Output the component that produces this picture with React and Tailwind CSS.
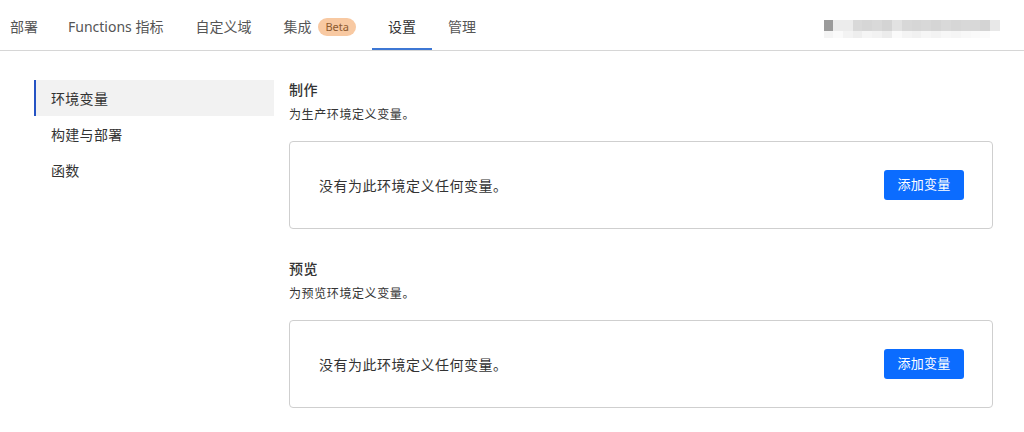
import React from "react";

const tabs = [
  { label: "部署" },
  { label: "Functions 指标" },
  { label: "自定义域" },
  { label: "集成", badge: "Beta" },
  { label: "设置", active: true },
  { label: "管理" },
];

const topCells = ["#9b9b9b", "#ececec", "#ececec", "#d9d9d9", "#d6d6d6", "#d9d9d9", "#d4d4d4", "#e2e2e2", "#d8d8d8", "#d6d6d6", "#d8d8d8", "#d5d5d5", "#d9d9d9", "#d6d6d6", "#d8d8d8", "#d8d8d8", "#d4d4d4", "#e8e8e8"];
const botCells = ["#f4f4f4", "#fafafa", "#f3f3f3", "#eeeeee", "#f5f5f5", "#f2f2f2", "#ececec", "#fafafa", "#f4f4f4", "#f1f1f1", "#f6f6f6", "#f3f3f3", "#f7f7f7", "#f5f5f5", "#f8f8f8", "#fafafa", "#fbfbfb", "#ffffff"];

function Redacted() {
  return (
    <div className="flex flex-col w-[176px]">
      <div className="flex h-[11px]">
        {topCells.map((c, i) => (
          <div key={i} className={i === 0 ? "w-[9px] h-full" : "flex-1 h-full"} style={{ backgroundColor: c }} />
        ))}
      </div>
      <div className="flex h-[7px] rounded-br-full overflow-hidden">
        {botCells.map((c, i) => (
          <div key={i} className={i === 0 ? "w-[9px] h-full" : "flex-1 h-full"} style={{ backgroundColor: c }} />
        ))}
      </div>
    </div>
  );
}

function Section({ title, desc }) {
  return (
    <div>
      <div className="text-[14px] leading-[20px] font-medium text-[#333] tracking-[0.5px]">{title}</div>
      <div className="mt-[6px] text-[12px] leading-[18px] text-[#333] tracking-[0.6px]">{desc}</div>
      <div className="mt-[17px] h-[88px] border border-[#cfcfcf] rounded-[4px] flex items-center justify-between pl-[29px] pr-[28px]">
        <span className="text-[14px] text-[#333] tracking-[0.5px]">没有为此环境定义任何变量。</span>
        <button className="w-[80px] h-[30px] bg-[#0b6cff] text-white text-[13px] rounded-[3px] tracking-[0.3px]">添加变量</button>
      </div>
    </div>
  );
}

export default function App() {
  return (
    <div
      className="w-[1024px] h-[432px] bg-white overflow-hidden"
      style={{ fontFamily: '"Noto Sans", "Noto Sans CJK SC", sans-serif' }}
    >
      <header className="h-[51px] border-b border-[#d6d6d6] flex items-stretch justify-between pr-[24px]">
        <nav className="flex items-stretch">
          {tabs.map((t, i) => (
            <div
              key={t.label}
              className={`flex items-center pt-[5px] border-b-2 ${i === 0 ? "pl-[10px] pr-[14px]" : "px-4"} ${
                t.active ? "border-[#3d77d4] text-[#333]" : "border-transparent text-[#555]"
              } text-[14px]`}
            >
              <span>{t.label}</span>
              {t.badge && (
                <span className="ml-[7px] h-[18px] px-[7px] rounded-full bg-[#f8c9a2] text-[#8d5a2f] text-[11px] leading-[18px]">
                  {t.badge}
                </span>
              )}
            </div>
          ))}
        </nav>
        <div className="flex items-center pt-[7px]">
          <Redacted />
        </div>
      </header>

      <div className="flex pl-[34px] pr-[31px] pt-[29px] gap-[15px]">
        <aside className="w-[240px] shrink-0 flex flex-col">
          <div className="h-9 flex items-center pl-[15px] border-l-2 border-[#2553c4] bg-[#f2f2f2] text-[14px] text-[#333] tracking-[0.3px]">环境变量</div>
          <div className="h-9 flex items-center pl-[17px] text-[14px] text-[#333] tracking-[0.3px]">构建与部署</div>
          <div className="h-9 flex items-center pl-[17px] text-[14px] text-[#333] tracking-[0.3px]">函数</div>
        </aside>
        <main className="flex-1 flex flex-col gap-[30px]">
          <Section title="制作" desc="为生产环境定义变量。" />
          <Section title="预览" desc="为预览环境定义变量。" />
        </main>
      </div>
    </div>
  );
}
